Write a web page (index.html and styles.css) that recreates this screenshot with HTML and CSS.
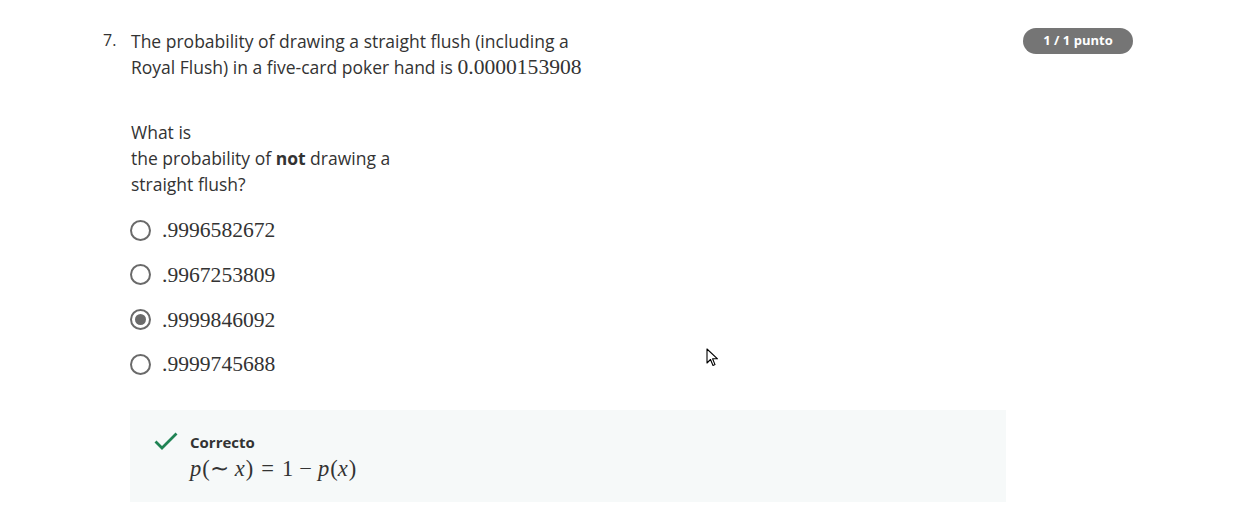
FILE: index.html
```html
<!DOCTYPE html>
<html lang="en">
<head>
<meta charset="utf-8">
<title>Question 7</title>
<link rel="stylesheet" href="styles.css">
</head>
<body>
<div class="question">
  <div class="qnum">7.</div>
  <div class="qbody">
    <p class="prompt">The probability of drawing a straight flush (including a<br>Royal Flush) in a five-card poker hand is <span class="math">0.0000153908</span></p>
    <p class="prompt ask">What is<br>the probability of <strong>not</strong> drawing a<br>straight flush?</p>
    <div class="options">
      <label class="option"><span class="radio"></span><span class="math">.9996582672</span></label>
      <label class="option"><span class="radio"></span><span class="math">.9967253809</span></label>
      <label class="option"><span class="radio checked"></span><span class="math">.9999846092</span></label>
      <label class="option"><span class="radio"></span><span class="math">.9999745688</span></label>
    </div>
    <div class="feedback">
      <svg class="check" width="24" height="18" viewBox="0 0 24 18"><path d="M1.5 9.5 L8 16 L22.5 1.5" fill="none" stroke="#1f8354" stroke-width="2.8"/></svg>
      <div class="fb-text">
        <div class="fb-title">Correcto</div>
        <div class="math formula"><i>p</i>(∼<span class="rel"></span><i>x</i>)<span class="op">=</span>1<span class="bin">−</span><i>p</i>(<i>x</i>)</div>
      </div>
    </div>
  </div>
  <div class="badge">1 / 1 punto</div>
</div>
<svg class="cursor" width="14" height="20" viewBox="0 0 14 20"><path d="M1 1 L1 15 L4.5 11.5 L7 17.5 L9 16.6 L6.6 10.8 L11.5 10.8 Z" fill="#fff" stroke="#000" stroke-width="1.1" stroke-linejoin="round"/></svg>
</body>
</html>
```
FILE: styles.css
```css
html, body {
  margin: 0;
  padding: 0;
  background: #ffffff;
}
body {
  font-family: "Open Sans", "Liberation Sans", sans-serif;
  color: #333333;
  font-size: 17.5px;
  line-height: 26px;
}
.question {
  display: flex;
  align-items: flex-start;
  margin-left: 103px;
  width: 1030px;
  padding-top: 28px;
}
.qnum {
  width: 28px;
  flex: none;
  font-size: 16px;
  line-height: 24px;
}
.qbody {
  flex: 1;
}
.prompt {
  margin: 0;
}
.ask {
  margin-top: 39px;
}
.math {
  font-family: "Liberation Serif", "Times New Roman", serif;
  font-size: 21.6px;
  color: #333333;
}
.options {
  margin-top: 11px;
  display: flex;
  flex-direction: column;
}
.option {
  height: 44.67px;
  display: flex;
  align-items: center;
  gap: 11px;
}
.radio {
  width: 21px;
  height: 21px;
  box-sizing: border-box;
  border: 2px solid #6a6a6a;
  border-radius: 50%;
  display: flex;
  align-items: center;
  justify-content: center;
  margin-left: -1px;
}
.radio.checked::after {
  content: "";
  width: 11px;
  height: 11px;
  border-radius: 50%;
  background: #6a6a6a;
}
.feedback {
  margin-top: 23px;
  margin-left: -1px;
  width: 876px;
  height: 92px;
  box-sizing: border-box;
  background: #f6f9f9;
  display: flex;
  align-items: flex-start;
  padding: 22px 0 0 24px;
  gap: 12px;
}
.fb-title {
  font-weight: 700;
  font-size: 15px;
  line-height: 20px;
  color: #333333;
}
.formula {
  margin-top: 4px;
  line-height: 26px;
  font-size: 22.5px;
}
.formula i {
  padding-right: 1px;
}
.formula .rel {
  display: inline-block;
  width: 6px;
}
.formula .op {
  margin: 0 8px;
}
.formula .bin {
  margin: 0 6px;
}
.badge {
  flex: none;
  width: 110px;
  height: 26px;
  border-radius: 13px;
  background: #757575;
  color: #ffffff;
  font-size: 13px;
  font-weight: 700;
  line-height: 25px;
  text-align: center;
}
.cursor {
  position: absolute;
  left: 706px;
  top: 348px;
}
```
